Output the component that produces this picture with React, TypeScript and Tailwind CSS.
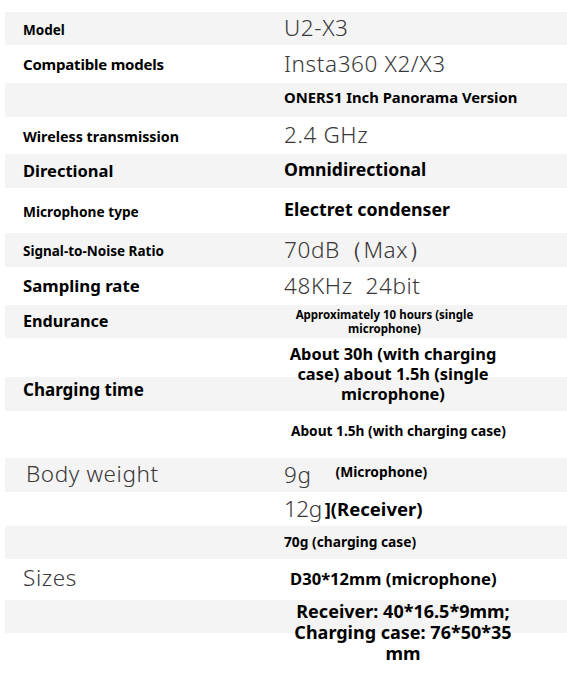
import type { ReactNode } from "react";

const font = "font-['Noto_Sans',sans-serif]";
const labelBold = "font-bold text-black";
const light = "text-[22.5px] font-light tracking-[0.6px] text-[#383838] leading-none";

type RowProps = {
  h: string;
  gray?: boolean;
  label?: ReactNode;
  children?: ReactNode;
};

function Row({ h, gray, label, children }: RowProps) {
  return (
    <div className={`ml-[5px] flex items-center ${h} ${gray ? "bg-[#f4f4f4]" : ""}`}>
      <div className="w-[279px] shrink-0 pl-[18px]">{label}</div>
      <div className="flex min-w-0 flex-1 items-center">{children}</div>
    </div>
  );
}

export default function App() {
  return (
    <div className={`h-[692px] w-[567px] overflow-hidden bg-white pt-[12px] ${font}`}>
      <Row h="h-[33px]" gray label={<span className={`${labelBold} text-[13.5px]`}>Model</span>}>
        <span className={light}>U2-X3</span>
      </Row>
      <Row h="h-[38px]" label={<span className={`${labelBold} text-[15px] tracking-[-0.2px]`}>Compatible models</span>}>
        <span className={light}>Insta360 X2/X3</span>
      </Row>
      <Row h="h-[34px]" gray>
        <span className="-mt-[5px] text-[14.8px] font-bold text-black">ONERS1 Inch Panorama Version</span>
      </Row>
      <Row h="h-[37px]" label={<span className={`${labelBold} text-[14.3px]`}>Wireless transmission</span>}>
        <span className={light}>2.4 GHz</span>
      </Row>
      <Row h="h-[34px]" gray label={<span className={`${labelBold} text-[16.5px]`}>Directional</span>}>
        <span className="-mt-[3px] text-[17.6px] font-bold text-black">Omnidirectional</span>
      </Row>
      <Row h="h-[45px]" label={<span className={`${labelBold} text-[13.7px]`}>Microphone type</span>}>
        <span className="-mt-[2px] text-[17.8px] font-bold text-black">Electret condenser</span>
      </Row>
      <Row h="h-[34px]" gray label={<span className={`${labelBold} text-[13.5px]`}>Signal-to-Noise Ratio</span>}>
        <span className={light}>70dB（Max）</span>
      </Row>
      <Row h="h-[38px]" label={<span className={`${labelBold} text-[16.8px]`}>Sampling rate</span>}>
        <span className={light}>48KHz&nbsp;&nbsp;24bit</span>
      </Row>
      <Row h="h-[33px]" gray label={<span className={`${labelBold} text-[16.2px]`}>Endurance</span>}>
        <p className="w-[201px] text-center text-[11.5px] font-bold leading-[14px] text-black">
          Approximately 10 hours (single
          <br />
          microphone)
        </p>
      </Row>

      {/* Charging time: the value spans two stripes */}
      <div className="ml-[5px] grid grid-cols-1 grid-rows-[39px_34px]">
        <div className="col-start-1 row-start-2 bg-[#f4f4f4]" />
        <div className="col-start-1 row-start-1 row-span-2 flex">
          <div className="flex w-[279px] shrink-0 items-end pb-[9px] pl-[18px]">
            <span className={`${labelBold} text-[17px]`}>Charging time</span>
          </div>
          <div className="flex items-center pb-[2px]">
            <p className="w-[218px] text-center text-[16.4px] font-bold leading-[20px] text-black">
              About 30h (with charging
              <br />
              case) about 1.5h (single
              <br />
              microphone)
            </p>
          </div>
        </div>
      </div>

      <Row h="h-[47px]">
        <span className="-mt-[7px] pl-[7px] text-[13.7px] font-bold text-black">About 1.5h (with charging case)</span>
      </Row>
      <Row h="h-[34px]" gray label={<span className="pl-[3px] text-[22.5px] font-light leading-none tracking-[0.6px] text-[#383838]">Body weight</span>}>
        <span className={light}>9g</span>
        <span className="-mt-[6px] ml-[24px] text-[13.8px] font-bold text-black">(Microphone)</span>
      </Row>
      <Row h="h-[34px]">
        <span className="text-[22.5px] font-light leading-none tracking-[-0.5px] text-[#383838]">12g</span>
        <span className="ml-[3px] text-[18.5px] font-bold leading-none text-black">](Receiver)</span>
      </Row>
      <Row h="h-[33px]" gray>
        <span className="text-[13.75px] font-bold text-black">70g (charging case)</span>
      </Row>
      <Row h="h-[41px]" label={<span className="text-[22.5px] font-light leading-none tracking-[0.6px] text-[#383838]">Sizes</span>}>
        <span className="pl-[6px] text-[16.6px] font-bold text-black">D30*12mm (microphone)</span>
      </Row>

      {/* Sizes continued: three lines over one stripe */}
      <div className="ml-[5px] grid grid-cols-1 grid-rows-[33px_auto]">
        <div className="col-start-1 row-start-1 bg-[#f4f4f4]" />
        <div className="col-start-1 row-start-1 row-span-2 flex pt-[1px]">
          <div className="w-[279px] shrink-0" />
          <p className="ml-[1px] w-[236px] text-center text-[18px] font-bold leading-[21px] text-black">
            Receiver: 40*16.5*9mm;
            <br />
            Charging case: 76*50*35
            <br />
            mm
          </p>
        </div>
      </div>
    </div>
  );
}
